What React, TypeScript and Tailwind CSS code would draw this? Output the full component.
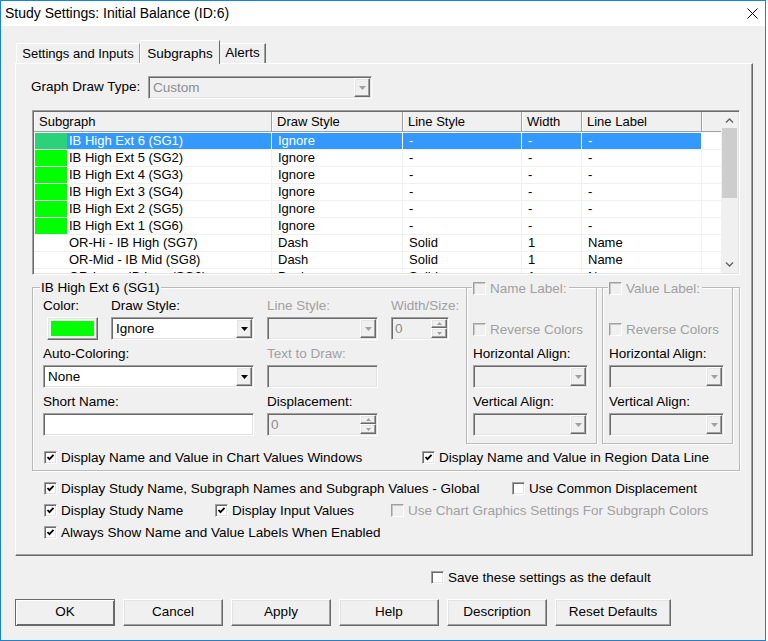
import React from "react";

const sunken =
  "border border-t-[#a0a0a0] border-l-[#a0a0a0] border-r-white border-b-white shadow-[inset_1px_1px_0_#696969,inset_-1px_-1px_0_#e3e3e3]";
const raised =
  "border border-t-white border-l-white border-r-[#696969] border-b-[#696969] shadow-[inset_-1px_-1px_0_#a0a0a0,inset_1px_1px_0_#e3e3e3]";

function Triangle({ disabled }: { disabled?: boolean }) {
  return (
    <svg width="7" height="4" viewBox="0 0 7 4">
      <polygon points="0,0 7,0 3.5,4" fill={disabled ? "#a0a0a0" : "#000"} />
    </svg>
  );
}

function Combo({ className, value, disabled }: { className: string; value?: string; disabled?: boolean }) {
  return (
    <div className={`${sunken} flex h-[23px] p-[1px] ${disabled ? "bg-[#f0f0f0]" : "bg-white"} ${className}`}>
      <span className={`flex-1 pl-[3px] text-[13.5px] leading-[20px] ${disabled ? "text-[#8c8c8c]" : "text-black"}`}>{value}</span>
      <span className={`${raised} flex w-[16px] items-center justify-center bg-[#f0f0f0]`}>
        <Triangle disabled={disabled} />
      </span>
    </div>
  );
}

function Spin({ className, value }: { className: string; value: string }) {
  return (
    <div className={`${sunken} flex h-[23px] bg-[#f0f0f0] p-[1px] ${className}`}>
      <span className="flex-1 pl-[2px] text-[13.5px] leading-[19px] text-[#8c8c8c]">{value}</span>
      <span className="flex w-[16px] flex-col">
        <span className={`${raised} flex h-[9px] items-center justify-center bg-[#f0f0f0]`}>
          <svg width="5" height="3" viewBox="0 0 5 3">
            <polygon points="2.5,0 5,3 0,3" fill="#a0a0a0" />
          </svg>
        </span>
        <span className={`${raised} flex flex-1 items-center justify-center bg-[#f0f0f0]`}>
          <svg width="5" height="3" viewBox="0 0 5 3">
            <polygon points="0,0 5,0 2.5,3" fill="#a0a0a0" />
          </svg>
        </span>
      </span>
    </div>
  );
}

function Box({ checked, disabled }: { checked?: boolean; disabled?: boolean }) {
  return (
    <span
      className={`flex h-[13px] w-[13px] shrink-0 items-center justify-center border border-t-[#a0a0a0] border-l-[#a0a0a0] border-r-white border-b-white ${
        disabled
          ? "bg-[#f0f0f0] shadow-[inset_1px_1px_0_#c8c8c8]"
          : "bg-white shadow-[inset_1px_1px_0_#696969,inset_-1px_-1px_0_#e3e3e3]"
      }`}
    >
      {checked && (
        <svg width="9" height="9" viewBox="0 0 9 9">
          <polyline points="1.5,4 3.5,6.2 7.5,1.8" fill="none" stroke="#000" strokeWidth="1.8" />
        </svg>
      )}
    </span>
  );
}

function CheckLabel({ label, checked, disabled, className = "" }: { label: string; checked?: boolean; disabled?: boolean; className?: string }) {
  return (
    <div className={`flex h-[16px] items-center gap-[4px] ${className}`}>
      <Box checked={checked} disabled={disabled} />
      <span className={`h-[16px] text-[13.5px] leading-[17px] whitespace-nowrap ${disabled ? "text-[#a0a0a0]" : "text-black"}`}>{label}</span>
    </div>
  );
}

function Label({ children, disabled }: { children: React.ReactNode; disabled?: boolean }) {
  return (
    <div className={`h-[16px] text-[13.5px] leading-[18px] whitespace-nowrap ${disabled ? "text-[#a0a0a0]" : "text-black"}`}>{children}</div>
  );
}

const rows = [
  { name: "IB High Ext 6 (SG1)", style: "Ignore", line: "-", width: "-", label: "-", swatch: true, selected: true },
  { name: "IB High Ext 5 (SG2)", style: "Ignore", line: "-", width: "-", label: "-", swatch: true },
  { name: "IB High Ext 4 (SG3)", style: "Ignore", line: "-", width: "-", label: "-", swatch: true },
  { name: "IB High Ext 3 (SG4)", style: "Ignore", line: "-", width: "-", label: "-", swatch: true },
  { name: "IB High Ext 2 (SG5)", style: "Ignore", line: "-", width: "-", label: "-", swatch: true },
  { name: "IB High Ext 1 (SG6)", style: "Ignore", line: "-", width: "-", label: "-", swatch: true },
  { name: "OR-Hi - IB High (SG7)", style: "Dash", line: "Solid", width: "1", label: "Name" },
  { name: "OR-Mid - IB Mid (SG8)", style: "Dash", line: "Solid", width: "1", label: "Name" },
  { name: "OR-Low - IB Low (SG9)", style: "Dash", line: "Solid", width: "1", label: "Name" },
];

function SubgraphTable() {
  const head = "flex items-center border-r border-[#a0a0a0] pl-[5px] leading-[19px] shadow-[inset_1px_0_0_#fff]";
  return (
    <div className={`${sunken} mt-[11px] flex h-[165px] w-[708px] bg-white p-[1px]`}>
      <div className="flex flex-1 flex-col overflow-hidden">
        <div className="flex h-[20px] shrink-0 border-b border-[#a0a0a0] bg-[#f0f0f0]">
          <div className={`${head} w-[238px]`}>Subgraph</div>
          <div className={`${head} w-[131px]`}>Draw Style</div>
          <div className={`${head} w-[119px]`}>Line Style</div>
          <div className={`${head} w-[60px]`}>Width</div>
          <div className={`${head} w-[120px]`}>Line Label</div>
          <div className="flex-1 shadow-[inset_1px_0_0_#fff]" />
        </div>
        <div className="pt-[1px]">
          {rows.map((r) => {
            const cell = `border-r pl-[6px] leading-[16px] ${r.selected ? "border-white bg-[#3399ff] text-white" : "border-[#f0f0f0] text-black"}`;
            return (
              <div key={r.name} className="flex h-[17px] border-b border-[#f0f0f0]">
                <div className="flex w-[238px] border-r border-[#f0f0f0]">
                  <span
                    className={`ml-[1px] h-[16px] w-[32px] ${r.swatch ? (r.selected ? "bg-[#2ad37a]" : "bg-[#00ff00]") : ""}`}
                  />
                  <span className={`flex-1 pl-[2px] leading-[16px] ${r.selected ? "bg-[#3399ff] text-white" : "text-black"}`}>{r.name}</span>
                </div>
                <div className={`${cell} w-[131px]`}>{r.style}</div>
                <div className={`${cell} w-[119px]`}>{r.line}</div>
                <div className={`${cell} w-[60px]`}>{r.width}</div>
                <div className={`${cell} w-[120px]`}>{r.label}</div>
                <div className="flex-1" />
              </div>
            );
          })}
        </div>
      </div>
      <div className="flex w-[17px] flex-col bg-[#f0f0f0]">
        <div className="flex h-[16px] items-center justify-center">
          <svg width="9" height="5" viewBox="0 0 9 5">
            <polyline points="1,4.5 4.5,1 8,4.5" fill="none" stroke="#606060" strokeWidth="1.3" />
          </svg>
        </div>
        <div className="ml-[1px] h-[70px] w-[15px] bg-[#cdcdcd]" />
        <div className="flex-1" />
        <div className="flex h-[18px] items-center justify-center">
          <svg width="9" height="5" viewBox="0 0 9 5">
            <polyline points="1,0.5 4.5,4 8,0.5" fill="none" stroke="#606060" strokeWidth="1.3" />
          </svg>
        </div>
      </div>
    </div>
  );
}

function LabelGroup({ title, className }: { title: string; className: string }) {
  return (
    <div className={`relative -mt-[1px] h-[157px] w-[131px] border border-[#b9b9b9] shadow-[inset_1px_1px_0_#fff,1px_1px_0_#fff] pl-[6px] pt-[33px] ${className}`}>
      <div className="absolute -top-[8px] left-[5px] bg-[#f0f0f0] pl-[1px] pr-[2px]">
        <CheckLabel label={title} disabled />
      </div>
      <CheckLabel label="Reverse Colors" disabled />
      <div className="mt-[8px]">
        <Label>Horizontal Align:</Label>
      </div>
      <Combo className="mt-[4px] w-[115px]" disabled />
      <div className="mt-[5px]">
        <Label>Vertical Align:</Label>
      </div>
      <Combo className="mt-[4px] w-[115px]" disabled />
    </div>
  );
}

function SubgraphGroup() {
  return (
    <div className="relative mt-[12px] h-[184px] w-[708px] border border-[#b9b9b9] shadow-[inset_1px_1px_0_#fff,1px_1px_0_#fff]">
      <span className="absolute -top-[8px] left-[7px] bg-[#f0f0f0] px-[1px] text-[13.5px] leading-[16px]">IB High Ext 6 (SG1)</span>
      <div className="flex items-start">
        <div className="grid grid-cols-[68px_156px_124px_58px] gap-y-[5px] pl-[10px] pt-[9px]">
          <div className="flex flex-col">
            <Label>Color:</Label>
            <div className={`${raised} mt-[4px] ml-[4px] flex h-[23px] w-[51px] items-center justify-center bg-[#f0f0f0]`}>
              <span className="h-[15px] w-[43px] bg-[#00ff00]" />
            </div>
          </div>
          <div className="flex flex-col">
            <Label>Draw Style:</Label>
            <Combo className="mt-[4px] w-[143px]" value="Ignore" />
          </div>
          <div className="flex flex-col">
            <Label disabled>Line Style:</Label>
            <Combo className="mt-[4px] w-[111px]" disabled />
          </div>
          <div className="flex flex-col">
            <Label disabled>Width/Size:</Label>
            <Spin className="mt-[4px] w-[58px]" value="0" />
          </div>

          <div className="col-span-2 flex flex-col">
            <Label>Auto-Coloring:</Label>
            <Combo className="mt-[4px] w-[211px]" value="None" />
          </div>
          <div className="flex flex-col">
            <Label disabled>Text to Draw:</Label>
            <div className={`${sunken} mt-[4px] h-[23px] w-[111px] bg-[#f0f0f0]`} />
          </div>
          <div />

          <div className="col-span-2 flex flex-col">
            <Label>Short Name:</Label>
            <div className={`${sunken} mt-[4px] h-[23px] w-[211px] bg-white`} />
          </div>
          <div className="flex flex-col">
            <Label>Displacement:</Label>
            <Spin className="mt-[4px] w-[111px]" value="0" />
          </div>
          <div />
        </div>
        <LabelGroup title="Name Label:" className="ml-[17px]" />
        <LabelGroup title="Value Label:" className="ml-[5px]" />
      </div>
      <div className="mt-[5px] flex pl-[11px]">
        <CheckLabel label="Display Name and Value in Chart Values Windows" checked className="w-[378px]" />
        <CheckLabel label="Display Name and Value in Region Data Line" checked />
      </div>
    </div>
  );
}

export default function App() {
  const buttons = [
    { label: "Cancel", w: "w-[100px]" },
    { label: "Apply", w: "w-[100px]" },
    { label: "Help", w: "w-[100px]" },
    { label: "Description", w: "w-[100px]" },
    { label: "Reset Defaults", w: "w-[116px]" },
  ];
  return (
    <div className="h-[641px] w-[768px] bg-white font-['Liberation_Sans',Arial,sans-serif] text-[13px] text-black">
      <div className="flex h-[641px] w-[766px] flex-col border border-[#1883d7]">
        {/* Title bar */}
        <div className="flex h-[25px] shrink-0 items-center justify-between bg-white">
          <span className="pl-[4px] text-[14px]">Study Settings: Initial Balance (ID:6)</span>
          <svg width="11" height="11" viewBox="0 0 11 11" className="mr-[7px]">
            <path d="M0.5 0.5 L10.5 10.5 M10.5 0.5 L0.5 10.5" stroke="#000" strokeWidth="1" />
          </svg>
        </div>

        {/* Client area */}
        <div className="flex flex-1 flex-col bg-[#f0f0f0]">
          <div className="ml-[15px] flex h-[37px] shrink-0 items-end">
            <div className="flex h-[20px] w-[124px] items-center justify-center border border-b-0 border-t-white border-l-white border-r-[#a0a0a0]">
              Settings and Inputs
            </div>
            <div className="relative z-10 -mb-[1px] flex h-[24px] w-[80px] items-start justify-center border border-b-0 border-t-white border-l-white border-r-[#696969] bg-[#f0f0f0] pt-[3px] text-[13.5px]">
              Subgraphs
            </div>
            <div className="flex h-[20px] w-[46px] items-center justify-center border border-b-0 border-l-0 border-t-white border-r-[#696969] shadow-[inset_-1px_0_0_#a0a0a0] text-[13.5px]">
              Alerts
            </div>
          </div>

          <div className="ml-[14px] flex h-[493px] w-[738px] flex-col border border-t-white border-l-white border-r-[#696969] border-b-[#696969] pl-[16px] shadow-[inset_-1px_-1px_0_#a0a0a0]">
            <div className="-ml-[1px] mt-[12px] flex items-center">
              <span className="w-[117px] text-[13.5px]">Graph Draw Type:</span>
              <Combo className="w-[224px]" value="Custom" disabled />
            </div>

            <SubgraphTable />
            <SubgraphGroup />

            <div className="ml-[12px] mt-[9px] flex">
              <CheckLabel label="Display Study Name, Subgraph Names and Subgraph Values - Global" checked className="w-[468px]" />
              <CheckLabel label="Use Common Displacement" />
            </div>
            <div className="ml-[12px] mt-[6px] flex">
              <CheckLabel label="Display Study Name" checked className="w-[171px]" />
              <CheckLabel label="Display Input Values" checked className="w-[176px]" />
              <CheckLabel label="Use Chart Graphics Settings For Subgraph Colors" disabled />
            </div>
            <div className="ml-[12px] mt-[6px] flex">
              <CheckLabel label="Always Show Name and Value Labels When Enabled" checked />
            </div>
          </div>

          <div className="ml-[430px] mt-[13px] flex">
            <CheckLabel label="Save these settings as the default" />
          </div>

          <div className="ml-[14px] mt-[14px] flex gap-[8px] text-[13.5px]">
            <button className="flex h-[27px] w-[100px] items-center justify-center border border-[#696969] bg-[#f0f0f0] shadow-[inset_1px_1px_0_#fff,inset_-1px_-1px_0_#696969]">
              OK
            </button>
            {buttons.map((b) => (
              <button key={b.label} className={`${raised} flex h-[27px] items-center justify-center bg-[#f0f0f0] ${b.w}`}>
                {b.label}
              </button>
            ))}
          </div>
        </div>
      </div>
    </div>
  );
}
